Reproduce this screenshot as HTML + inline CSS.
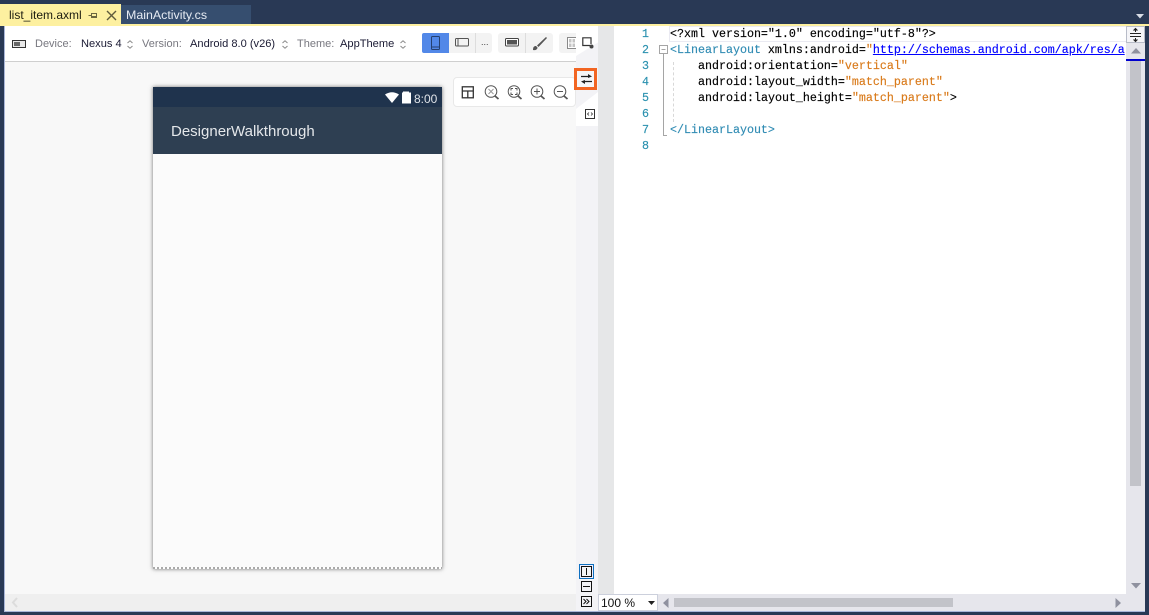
<!DOCTYPE html>
<html><head><meta charset="utf-8"><style>
html,body{margin:0;padding:0;width:1149px;height:615px;overflow:hidden;background:#293955}
*{box-sizing:border-box}
.a{position:absolute;white-space:nowrap}
body{font-family:"Liberation Sans",sans-serif;position:relative}
.t{font-size:11.1px;color:#1a1a33;top:38px;line-height:13px}
.l{font-size:11px;color:#77777f;top:38px;line-height:13px}
.code{font-family:"Liberation Mono",monospace;font-size:11.67px;line-height:16px;color:#000;left:670px;-webkit-text-stroke:.15px currentColor}
.n{font-family:"Liberation Mono",monospace;font-size:11.67px;line-height:16px;color:#2b91af;left:642px;-webkit-text-stroke:.15px currentColor}
.o{color:#d97a1a}.b{color:#2f8bb3}
svg{position:absolute;overflow:visible}
</style></head><body>
<div class="a" style="left:0;top:0;width:1149px;height:24px;background:#293955"></div>
<div class="a" style="left:0;top:4px;width:121px;height:22px;background:#fdf0a0"></div>
<div class="a" style="left:121px;top:5px;width:130px;height:19px;background:#364e6f"></div>
<div class="a" style="left:0;top:24px;width:1149px;height:2px;background:#fdf0a0"></div>
<div class="a" style="left:9px;top:8px;font-size:12px;line-height:15px;color:#1c1c10">list_item.axml</div>
<div class="a" style="left:126px;top:8px;font-size:12.4px;line-height:15px;color:#e6ebf3">MainActivity.cs</div>
<svg style="left:88px;top:11px" width="10" height="10" viewBox="0 0 10 10" fill="none" stroke="#6b6640"><path d="M.5 4.500h3M3.500 2v5M3.500 2.500h5v4h-5M3.500 5.500h5"/></svg>
<svg style="left:106px;top:10px" width="11" height="11" viewBox="0 0 11 11" fill="none" stroke="#5f5b3c" stroke-width="1.400"><path d="M1 1l9 9M10 1l-9 9"/></svg>
<svg style="left:1136px;top:14px" width="9" height="5"><path d="M0 0h8L4 4.500z" fill="#d8dde6"/></svg>

<div class="a" style="left:4px;top:26px;width:1141px;height:586px;background:#fff"></div>
<div class="a" style="left:0;top:26px;width:5px;height:589px;background:#293955"></div>
<div class="a" style="left:4px;top:26px;width:1px;height:586px;background:#a9b6d8"></div>
<div class="a" style="left:0;top:612px;width:1149px;height:3px;background:#293955"></div>
<div class="a" style="left:4px;top:611px;width:1141px;height:1px;background:#a9b6d8"></div>
<div class="a" style="left:1145px;top:26px;width:4px;height:589px;background:#293955"></div>

<div class="a" style="left:5px;top:61px;width:571px;height:1px;background:#cfcfcf"></div>
<div class="a" style="left:5px;top:62px;width:571px;height:532px;background:#f8f8f8"></div>
<div class="a" style="left:5px;top:594px;width:571px;height:17px;background:#efefef"></div>
<svg style="left:11px;top:597px" width="7" height="11" fill="none" stroke="#dcdcdc" stroke-width="2"><path d="M6 1L2 5.500L6 10"/></svg>
<svg style="left:12px;top:40px" width="14" height="9"><rect x=".5" y=".5" width="13" height="7" fill="#e8e8e8" stroke="#333"/><rect x="2" y="2" width="6" height="4" fill="#666"/></svg>
<div class="a l" style="left:35px">Device:</div>
<div class="a t" style="left:81px">Nexus 4</div>
<div class="a l" style="left:142px">Version:</div>
<div class="a t" style="left:190px">Android 8.0 (v26)</div>
<div class="a l" style="left:297px">Theme:</div>
<div class="a t" style="left:340px">AppTheme</div>
<svg style="left:127px;top:40px" width="6" height="9" fill="none" stroke="#8a8a8a"><path d="M.5 3L3 .8L5.500 3M.5 6L3 8.200L5.500 6"/></svg>
<svg style="left:282px;top:40px" width="6" height="9" fill="none" stroke="#8a8a8a"><path d="M.5 3L3 .8L5.500 3M.5 6L3 8.200L5.500 6"/></svg>
<svg style="left:400px;top:40px" width="6" height="9" fill="none" stroke="#8a8a8a"><path d="M.5 3L3 .8L5.500 3M.5 6L3 8.200L5.500 6"/></svg>

<div class="a" style="left:422px;top:33px;width:70px;height:20px;background:#f3f3f3;border-radius:3px"></div>
<div class="a" style="left:422px;top:33px;width:27px;height:20px;background:#5288e8;border-radius:2px 0 0 2px"></div>
<svg style="left:430px;top:36px" width="11" height="15" fill="none" stroke="#25406f"><rect x="1.500" y=".5" width="8" height="13" rx="1"/><path d="M1.500 11h8"/></svg>
<svg style="left:455px;top:38px" width="15" height="10" fill="none" stroke="#555"><rect x=".5" y=".5" width="13" height="7.500" rx="1"/><path d="M3 .5v7.500"/></svg>
<div class="a" style="left:475px;top:33px;width:1px;height:20px;background:#ddd"></div>
<div class="a" style="left:481px;top:36px;font-size:9px;line-height:12px;color:#444">...</div>
<div class="a" style="left:498px;top:33px;width:55px;height:20px;background:#f3f3f3;border-radius:3px"></div>
<svg style="left:505px;top:38px" width="15" height="9"><rect x=".5" y=".5" width="13" height="7.500" rx="1" fill="#fff" stroke="#444"/><rect x="2" y="2" width="10" height="4.500" fill="#555"/></svg>
<div class="a" style="left:525px;top:33px;width:1px;height:20px;background:#ddd"></div>
<svg style="left:532px;top:36px" width="16" height="15"><path d="M1 14c0-3 1-4 3-4l1.500 1.500c0 2-2 3-4.500 2.500z" fill="#555"/><path d="M5 9.500L14 1l1 1-8.500 9z" fill="#555"/></svg>
<div class="a" style="left:559px;top:33px;width:17px;height:20px;background:#f3f3f3;border-radius:3px 0 0 3px"></div>
<svg style="left:567px;top:37px" width="9" height="12"><rect x=".5" y=".5" width="9" height="11" fill="#fff" stroke="#8a8a8a"/><path d="M2 2h2.500v3.500H2zM5.500 2H8v3.500H5.500zM2 6.500h2.500V10H2zM5.500 6.500H8V10H5.500z" fill="#c4c4c4"/></svg>

<div class="a" style="left:453px;top:77px;width:123px;height:30px;background:#fff;border:1px solid #e8e8e8;border-radius:4px"></div>
<svg style="left:461px;top:86px" width="14" height="14" fill="none" stroke="#333" stroke-width="1.300"><rect x="1.300" y=".8" width="11" height="11"/><path d="M1.300 5h11M6.800 5v6.800"/></svg>
<svg style="left:484px;top:85px" width="16" height="15" fill="none" stroke="#555"><circle cx="7" cy="6.500" r="5.800"/><path d="M11 11l3.500 3" stroke-width="1.800"/><path d="M4.500 4l5 5M9.500 4l-5 5" stroke="#999"/></svg>
<svg style="left:507px;top:85px" width="16" height="15" fill="none" stroke="#555"><circle cx="7" cy="6.500" r="5.800"/><path d="M11 11l3.500 3" stroke-width="1.800"/><path d="M4 5.500V3.500h2M8 3.500h2v2M10 7.500v2H8M6 9.500H4v-2"/></svg>
<svg style="left:530px;top:85px" width="16" height="15" fill="none" stroke="#555"><circle cx="7" cy="6.500" r="5.800"/><path d="M11 11l3.500 3" stroke-width="1.800"/><path d="M4 6.500h6M7 3.500v6"/></svg>
<svg style="left:553px;top:85px" width="16" height="15" fill="none" stroke="#555"><circle cx="7" cy="6.500" r="5.800"/><path d="M11 11l3.500 3" stroke-width="1.800"/><path d="M4 6.500h6"/></svg>

<div class="a" style="left:153px;top:87px;width:289px;height:482px;background:#fbfbfb;box-shadow:0 0 4px rgba(0,0,0,.55)"></div>
<div class="a" style="left:153px;top:87px;width:289px;height:20px;background:#1f334d"></div>
<div class="a" style="left:153px;top:107px;width:289px;height:47px;background:#2e3f52"></div>
<div class="a" style="left:171px;top:123px;font-size:15px;line-height:18px;color:#e4e7ea">DesignerWalkthrough</div>
<div class="a" style="left:414px;top:92px;font-size:12px;line-height:14px;color:#dfe3e8">8:00</div>
<svg style="left:385px;top:92px" width="14" height="11"><path d="M0 2.500Q7-2 14 2.500L7 11z" fill="#fff"/></svg>
<svg style="left:401px;top:91px" width="11" height="13"><path d="M2 1.500V.5h6v1h2v11H1v-11z" fill="#fff"/></svg>
<div class="a" style="left:153px;top:567px;width:289px;height:2px;background:repeating-linear-gradient(90deg,#aaa 0 2px,#fff 2px 4px)"></div>

<div class="a" style="left:576px;top:26px;width:22px;height:585px;background:#f3f3f6"></div>
<div class="a" style="left:576px;top:26px;width:22px;height:30px;background:#fff;clip-path:polygon(0 0,100% 0,100% 55%,0 100%)"></div>
<div class="a" style="left:576px;top:92px;width:22px;height:34px;background:#fff;clip-path:polygon(100% 0,100% 100%,0 100%,0 50%)"></div>
<div class="a" style="left:598px;top:26px;width:16px;height:568px;background:#e6e7e8"></div>
<svg style="left:582px;top:37px" width="12" height="12"><path d="M8 8.500H.8V.8h8.200V7" fill="none" stroke="#333" stroke-width="1.200"/><circle cx="9.500" cy="9.500" r="2" fill="#444"/></svg>
<div class="a" style="left:574px;top:68px;width:23px;height:22px;border:3px solid #f26522;background:#f6f6f8"></div>
<svg style="left:580px;top:73px" width="13" height="12"><path d="M1 3.500h8M12 8.500H4" fill="none" stroke="#222" stroke-width="1.200"/><path d="M8 1l4 2.500L8 5zM5 7L1 8.500L5 11z" fill="#222"/></svg>
<svg style="left:585px;top:109px" width="10" height="10"><rect x=".5" y=".5" width="9" height="9" fill="#fff" stroke="#333"/><path d="M4 3.500L2.500 5L4 6.500M6 3.500L7.500 5L6 6.500" fill="none" stroke="#333" stroke-width=".8"/></svg>

<div class="a" style="left:579px;top:564px;width:15px;height:15px;border:1px solid #0e70c0;background:#eef"></div>
<svg style="left:581px;top:566px" width="11" height="11"><rect x=".5" y=".5" width="10" height="10" fill="#f3f3f6" stroke="#111"/><path d="M5.500 2v7" stroke="#111"/></svg>
<svg style="left:581px;top:581px" width="11" height="11"><rect x=".5" y=".5" width="10" height="10" fill="#f3f3f6" stroke="#111"/><path d="M2 5.500h7" stroke="#111"/></svg>
<svg style="left:581px;top:596px" width="11" height="11"><rect x=".5" y=".5" width="10" height="10" fill="#f3f3f6" stroke="#111"/><path d="M2.500 3l2.500 2.500L2.500 8M5.500 3l2.500 2.500L5.500 8" fill="none" stroke="#111"/></svg>

<div class="a" style="left:669px;top:26px;width:457px;height:16px;border:1px solid #eaeaf2;border-right:0"></div>
<div class="a n" style="top:26px">1</div><div class="a n" style="top:42px">2</div><div class="a n" style="top:58px">3</div><div class="a n" style="top:74px">4</div><div class="a n" style="top:90px">5</div><div class="a n" style="top:106px">6</div><div class="a n" style="top:122px">7</div><div class="a n" style="top:138px">8</div>
<svg style="left:659px;top:45px" width="10" height="92" fill="none"><rect x=".5" y=".5" width="8" height="8" stroke="#a5a5a5"/><path d="M2.500 4.500h4M4.500 9v81.500H8" stroke="#a5a5a5"/></svg>
<div class="a" style="left:673px;top:62px;width:0;height:60px;border-left:1px dashed #d8d8d8"></div>
<div class="a code" style="top:26px">&lt;?xml version="1.0" encoding="utf-8"?&gt;</div>
<div class="a code" style="top:42px;width:456px;overflow:hidden"><span class="b">&lt;LinearLayout</span> xmlns:android=<span class="o">"</span><span style="color:#00f;text-decoration:underline">http://schemas.android.com/apk/res/a</span></div>
<div class="a code" style="top:58px;left:698px">android:orientation=<span class="o">"vertical"</span></div>
<div class="a code" style="top:74px;left:698px">android:layout_width=<span class="o">"match_parent"</span></div>
<div class="a code" style="top:90px;left:698px">android:layout_height=<span class="o">"match_parent"</span>&gt;</div>
<div class="a code" style="top:122px"><span class="b">&lt;/LinearLayout&gt;</span></div>

<div class="a" style="left:1126px;top:26px;width:19px;height:585px;background:#e6e6ec"></div>
<div class="a" style="left:1126px;top:26px;width:19px;height:17px;background:#f5f5f8;border:1px solid #b8bcc8"></div>
<svg style="left:1129px;top:28px" width="13" height="14" fill="none" stroke="#222"><path d="M1 5.500h11M1 8.500h11M6.500 1v3M6.500 10v3"/><path d="M4.500 2.500L6.500 .5L8.500 2.500M4.500 11.500L6.500 13.500L8.500 11.500" fill="#222"/></svg>
<svg style="left:1131px;top:48px" width="10" height="6"><path d="M5 0l5 5.500H0z" fill="#8f919f"/></svg>
<div class="a" style="left:1126px;top:59px;width:19px;height:2px;background:#0000cd"></div>
<div class="a" style="left:1130px;top:61px;width:11px;height:425px;background:#c2c3c9"></div>
<svg style="left:1131px;top:583px" width="10" height="6"><path d="M0 0h10L5 5.500z" fill="#8f919f"/></svg>

<div class="a" style="left:598px;top:594px;width:528px;height:17px;background:#e6e6ec"></div>
<div class="a" style="left:1126px;top:594px;width:19px;height:17px;background:#e6e6ec"></div>
<div class="a" style="left:598px;top:594px;width:60px;height:17px;background:#fff;border:1px solid #ccd0dc;font-size:12px;line-height:15px;padding:1px 0 0 2px;color:#111">100 %</div>
<svg style="left:648px;top:601px" width="7" height="4"><path d="M0 0h7L3.500 4z" fill="#222"/></svg>
<svg style="left:663px;top:598px" width="6" height="10"><path d="M5.500 0v10L0 5z" fill="#8f919f"/></svg>
<div class="a" style="left:674px;top:598px;width:279px;height:9px;background:#c2c3c9"></div>
<svg style="left:1115px;top:598px" width="6" height="10"><path d="M.5 0v10L6 5z" fill="#8f919f"/></svg>
</body></html>
